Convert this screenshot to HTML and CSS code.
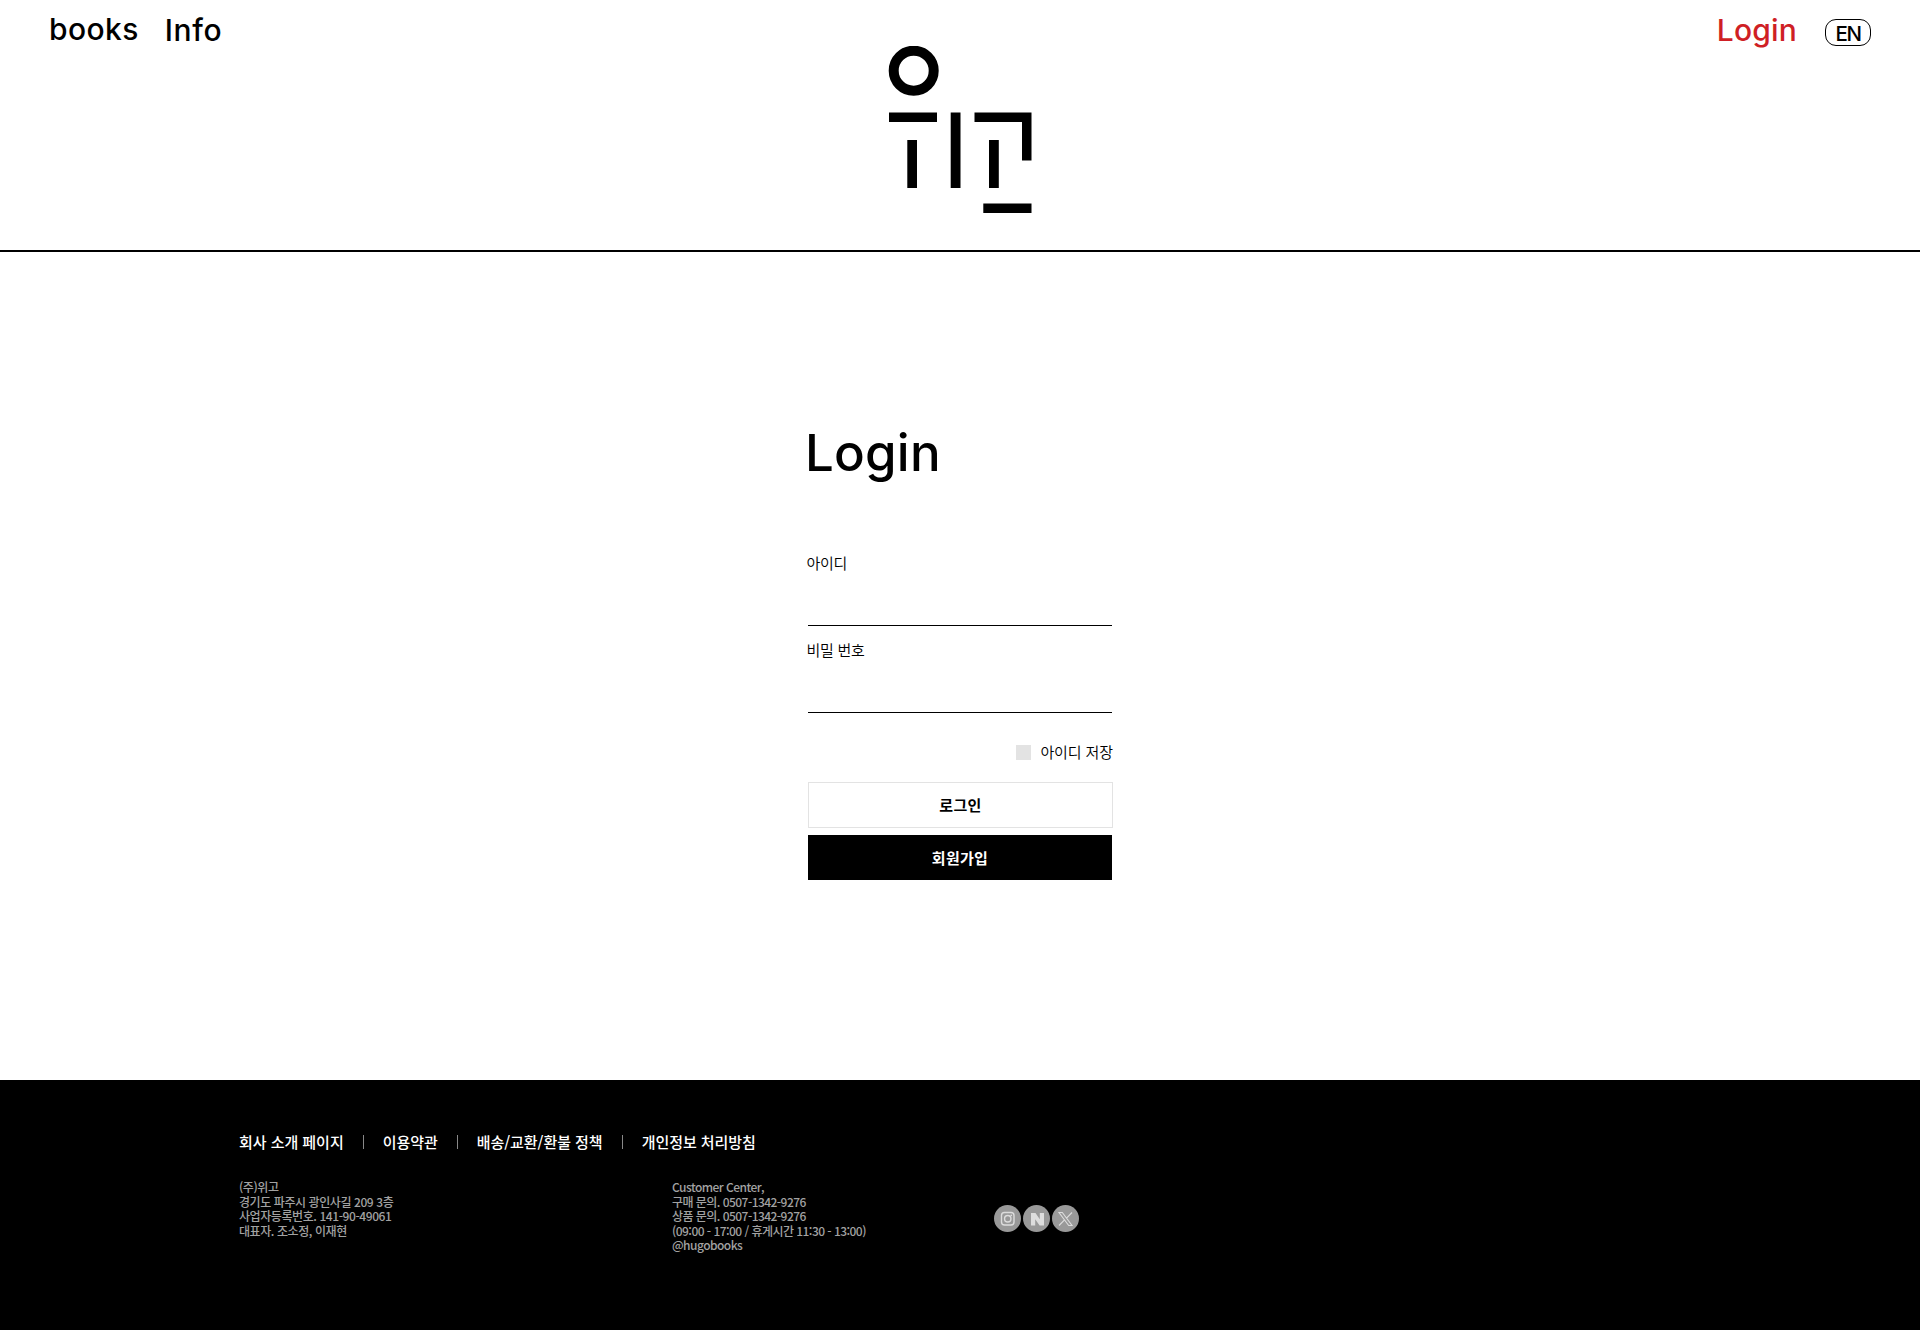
FILE: index.html
```html
<!DOCTYPE html>
<html lang="ko">
<head>
<meta charset="utf-8">
<title>위고 - Login</title>
<link rel="stylesheet" href="styles.css">
</head>
<body>
<header class="header">
  <nav class="nav nav-left">
    <a class="nav-books">books</a>
    <a class="nav-info">Info</a>
  </nav>
  <a class="logo" aria-label="위고">
    <svg width="144" height="168" viewBox="0 0 144 168">
      <circle cx="25.700" cy="24.700" r="20" fill="none" stroke="#000" stroke-width="10"/>
      <path d="M1 66.500h48v9.500H1zM19.300 94h9.700v48h-9.700zM62.700 66.500h9.800V142h-9.800zM86.500 66.500h57V114.500H134V76H86.500zM101 94h9.800v48H101zM95.300 157.500h48.200v9.500H95.300z"/>
    </svg>
  </a>
  <nav class="nav nav-right">
    <a class="nav-login">Login</a>
    <a class="lang">EN</a>
  </nav>
</header>
<main class="main">
  <form class="login">
    <h1 class="title">Login</h1>
    <label class="field">아이디<input class="input" type="text"></label>
    <label class="field">비밀 번호<input class="input" type="password"></label>
    <label class="remember"><span class="check"></span>아이디 저장</label>
    <button class="btn btn-login" type="button">로그인</button>
    <button class="btn btn-join" type="button">회원가입</button>
  </form>
</main>
<footer class="footer">
  <ul class="links">
    <li>회사 소개 페이지</li>
    <li>이용약관</li>
    <li>배송/교환/환불 정책</li>
    <li>개인정보 처리방침</li>
  </ul>
  <div class="info">
    <p class="company">(주)위고<br>경기도 파주시 광인사길 209 3층<br>사업자등록번호. 141-90-49061<br>대표자. 조소정, 이재현</p>
    <p class="center">Customer Center,<br>구매 문의. 0507-1342-9276<br>상품 문의. 0507-1342-9276<br>(09:00 - 17:00 / 휴게시간 11:30 - 13:00)<br>@hugobooks</p>
    <div class="social">
      <svg width="27" height="27" viewBox="0 0 27 27"><circle cx="13.500" cy="13.500" r="13.500" fill="#999"/><g fill="none" stroke="#ddd" stroke-width="1.400"><rect x="7.500" y="7.500" width="12.500" height="12.500" rx="3"/><circle cx="13.750" cy="13.750" r="3.200"/></g><circle cx="17.300" cy="10.300" r=".9" fill="#ddd"/></svg>
      <svg width="27" height="27" viewBox="0 0 27 27"><circle cx="13.500" cy="13.500" r="13.500" fill="#999"/><path d="M8 8h4.500l4.300 6.200V8H21v12.500h-4.400l-4.400-6.300v6.300H8z" fill="#ddd"/></svg>
      <svg width="27" height="27" viewBox="0 0 27 27"><circle cx="13.500" cy="13.500" r="13.500" fill="#999"/><path d="M7 7.500h3.300L20 20.500h-3.300zM20 7.500l-5.700 5.800M12.800 14.700L7 20.500" fill="none" stroke="#ddd" stroke-width="1.100"/></svg>
    </div>
  </div>
</footer>
</body>
</html>
```
FILE: styles.css
```css
* { box-sizing: border-box; }
body {
  margin: 0;
  background: #fff;
  color: #000;
  font: 15px/20px "Noto Sans CJK KR", sans-serif;
}
.header {
  display: grid;
  grid-template-columns: 1fr 144px 1fr;
  height: 252px;
  padding: 0 49px;
  border-bottom: 2px solid #000;
}
.nav {
  display: flex;
  align-items: flex-start;
  font: 500 30px/36px Inter, sans-serif;
}
.nav-left { padding-top: 11px; gap: 26px; }
.nav-books { letter-spacing: .4px; }
.nav-info { padding-top: 1px; letter-spacing: .7px; }
.nav-right { padding-top: 12px; gap: 28px; justify-content: flex-end; }
.nav-login { color: #cf1f25; letter-spacing: .2px; }
.lang {
  width: 46px;
  height: 27px;
  margin-top: 7px;
  border: 1px solid #000;
  border-radius: 11px;
  font-size: 20.500px;
  line-height: 28px;
  letter-spacing: -1.500px;
  text-align: center;
}
.logo { padding-top: 46px; }
.main {
  display: flex;
  justify-content: center;
  height: 828px;
  padding-top: 171px;
}
.login {
  display: flex;
  flex-direction: column;
  width: 304px;
}
.title {
  margin: 0 0 70px -3px;
  font: 500 51px/60px Inter, sans-serif;
  letter-spacing: .2px;
}
.field {
  display: flex;
  flex-direction: column;
  height: 73px;
  margin-bottom: 14px;
  text-indent: -1.500px;
  font-weight: 350;
  letter-spacing: -.3px;
}
.input {
  height: 53px;
  border: 0;
  border-bottom: 1px solid #000;
  outline: 0;
}
.remember {
  display: flex;
  justify-content: flex-end;
  align-items: center;
  gap: 9px;
  margin: 15px -1px 20px 0;
  font-weight: 350;
  letter-spacing: -.1px;
}
.check { width: 15px; height: 15px; background: #e3e3e3; }
.btn {
  padding: 0;
  border: 0;
  font: 700 15px/45px "Noto Sans CJK KR", sans-serif;
  letter-spacing: .3px;
}
.btn-login {
  width: 305px;
  height: 46px;
  margin-bottom: 7px;
  border: 1px solid #e3e3e3;
  background: #fff;
  color: #000;
  line-height: 43px;
  padding-bottom: 1px;
}
.btn-join { height: 45px; background: #000; color: #fff; }
.footer {
  height: 250px;
  padding: 52px 238px 0;
  background: #000;
}
.links {
  display: flex;
  margin: 0;
  padding: 0 0 0 1px;
  list-style: none;
  color: #fff;
  font-size: 15px;
  font-weight: 500;
  letter-spacing: -.04px;
}
.links li { display: flex; align-items: center; }
.links li + li::before {
  content: "";
  width: 1px;
  height: 14px;
  margin: 0 19px;
  background: #888;
}
.info {
  display: flex;
  margin-top: 28px;
  color: #a2a2a2;
  font-size: 12px;
  font-weight: 500;
  line-height: 14.500px;
}
.info p { margin: 0; padding-left: 1px; }
.company { width: 433px; letter-spacing: -.42px; }
.center { width: 323px; letter-spacing: -.54px; }
.social { display: flex; gap: 2px; padding-top: 25px; }
```
